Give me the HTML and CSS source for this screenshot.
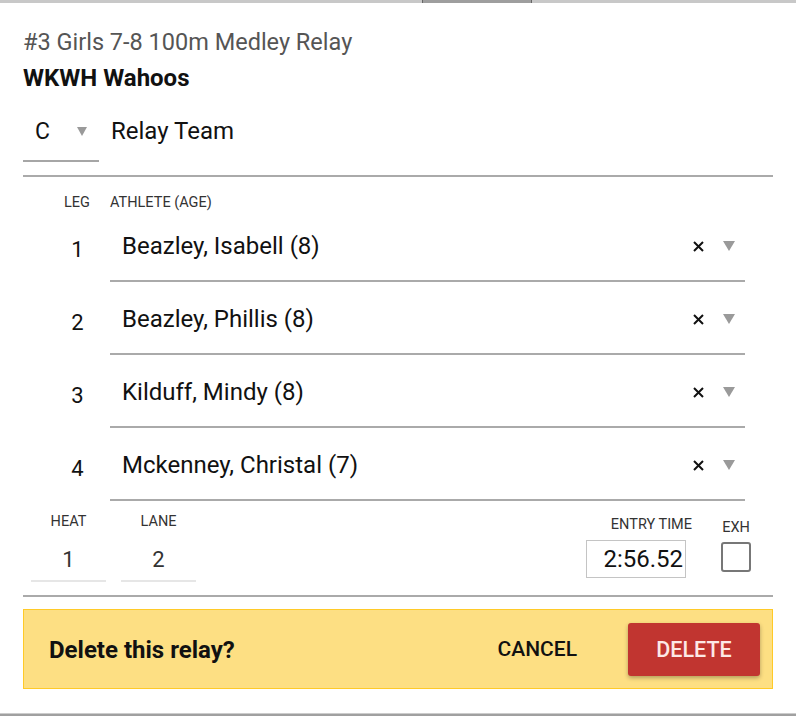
FILE: index.html
```html
<!DOCTYPE html>
<html lang="en">
    <head>
        <meta charset="utf-8" />
        <meta name="viewport" content="width=device-width, initial-scale=1" />
        <title>Relay entry</title>
        <link rel="stylesheet" href="styles.css">
    </head>
    <body>
        <svg xmlns="http://www.w3.org/2000/svg" style="display: none;">
            <symbol id="x" viewBox="0 0 11 11">
                <path d="M1 1L10 10M10 1L1 10" stroke="#111" stroke-width="2" fill="none"/>
            </symbol>
        </svg>

        <div class="topbar"><span class="tab"></span></div>

        <section class="dialog">
            <h2 class="event">#3 Girls 7-8 100m Medley Relay</h2>
            <h3 class="team">WKWH Wahoos</h3>

            <div class="relay">
                <div class="picker">C <span class="caret"></span></div>
                <span class="relay-name">Relay Team</span>
            </div>

            <div class="legs">
                <div class="heads"><span class="leg-h">LEG</span><span>ATHLETE (AGE)</span></div>
                <div class="leg"><span class="num">1</span><div class="athlete"><span>Beazley, Isabell (8)</span><svg class="clear"><use href="#x"></use></svg><span class="caret"></span></div></div>
                <div class="leg"><span class="num">2</span><div class="athlete"><span>Beazley, Phillis (8)</span><svg class="clear"><use href="#x"></use></svg><span class="caret"></span></div></div>
                <div class="leg"><span class="num">3</span><div class="athlete"><span>Kilduff, Mindy (8)</span><svg class="clear"><use href="#x"></use></svg><span class="caret"></span></div></div>
                <div class="leg"><span class="num">4</span><div class="athlete"><span>Mckenney, Christal (7)</span><svg class="clear"><use href="#x"></use></svg><span class="caret"></span></div></div>
            </div>

            <div class="seeds">
                <div class="field small"><label>HEAT</label><span class="val">1</span></div>
                <div class="field small"><label>LANE</label><span class="val">2</span></div>
                <div class="field time"><label>ENTRY TIME</label><span class="box">2:56.52</span></div>
                <div class="field exh"><label>EXH</label><span class="check"></span></div>
            </div>

            <div class="confirm">
                <strong>Delete this relay?</strong>
                <button class="cancel">CANCEL</button>
                <button class="delete">DELETE</button>
            </div>
        </section>

        <div class="bottombar"></div>
    </body>
</html>
```

FILE: styles.css
```css
* { margin: 0; padding: 0; box-sizing: border-box; }
body { font-family: Roboto, "Liberation Sans", sans-serif; color: #111; background: #fff; width: 796px; height: 716px; display: flex; flex-direction: column; }

.topbar { height: 3px; background: #c8c8c8; display: flex; padding-left: 422px; }
.topbar .tab { width: 110px; background: #9e9e9e; border-left: 1px solid #666; border-right: 1px solid #666; }

.dialog { flex: 1; padding: 25px 23px 0 23px; }
.event { font-size: 23.5px; font-weight: 400; color: #555; line-height: 28px; }
.team { font-size: 24px; font-weight: 700; line-height: 28px; margin-top: 8px; }

.relay { display: flex; align-items: center; margin-top: 14px; height: 56px; padding-bottom: 2px; }
.picker { width: 76px; height: 56px; padding: 0 0 4px 12px; font-size: 23px; display: flex; align-items: center; gap: 27px; border-bottom: 2px solid #a6a6a6; margin-bottom: -2px; }
.relay-name { font-size: 24px; margin-left: 12px; padding-bottom: 4px; }

.caret { width: 0; height: 0; border-left: 6px solid transparent; border-right: 6px solid transparent; border-top: 10px solid #9a9a9a; display: inline-block; }
.picker .caret { border-left-width: 5.5px; border-right-width: 5.5px; border-top-width: 9px; }

.legs { border-top: 2px solid #aaa; margin-top: 13px; }
.heads { display: flex; font-size: 14.5px; color: #333; margin-top: 18px; height: 16px; line-height: 16px; }
.heads .leg-h { width: 87px; padding-left: 41px; }
.leg { display: flex; align-items: flex-end; height: 73px; }
.heads + .leg { height: 71px; }
.num { width: 87px; text-align: center; font-size: 22px; line-height: 26px; padding-bottom: 19px; padding-left: 22px; }
.athlete { flex: 1; display: flex; align-items: center; height: 62px; border-bottom: 2px solid #aaa; font-size: 24px; padding: 0 10px 9px 12px; margin-right: 28px; }
.athlete span:first-child { flex: 1; }
.clear { width: 11px; height: 11px; margin-right: 19px; margin-top: 2px; }

.seeds { display: flex; align-items: flex-start; height: 96px; padding-top: 12px; border-bottom: 2px solid #aaa; }
.field { display: flex; flex-direction: column; align-items: center; }
.field label { font-size: 14.5px; color: #333; height: 18px; line-height: 18px; }
.field.small { width: 75px; margin-left: 8px; }
.field.small + .field.small { margin-left: 15px; }
.field .val { width: 75px; text-align: center; font-size: 22px; line-height: 28px; color: #333; height: 51px; padding-top: 15px; border-bottom: 2px solid #e6e6e6; }
.field.time { margin-left: auto; align-items: flex-end; padding-top: 3px; }
.field.time label { margin-right: -6px; }
.box { width: 100px; height: 38px; margin-top: 6px; border: 1px solid #c4c4c4; font-size: 24px; line-height: 36px; text-align: right; padding-right: 2px; }
.field.exh { margin-left: 35px; margin-right: 22px; padding-top: 6px; }
.check { width: 30px; height: 30px; border: 2px solid #777; border-radius: 3px; margin-top: 5px; }

.confirm { display: flex; align-items: center; height: 80px; background: #fddf83; border: 1px solid #ffca28; margin-top: 12px; padding: 0 12px 0 25px; }
.confirm strong { font-size: 24px; flex: 1; padding-top: 1px; }
.confirm button { font-family: inherit; border: 0; font-size: 21px; font-weight: 500; background: none; cursor: pointer; }
.cancel { color: #111; margin-right: 51px; }
.delete { width: 132px; height: 53px; background: #c13530 !important; color: #fde8e6; border-radius: 3px; box-shadow: 0 2px 4px rgba(0,0,0,0.3); font-size: 21.5px !important; }

.bottombar { height: 3px; background: #a0a0a0; border-top: 1px solid #ccc; }
```
